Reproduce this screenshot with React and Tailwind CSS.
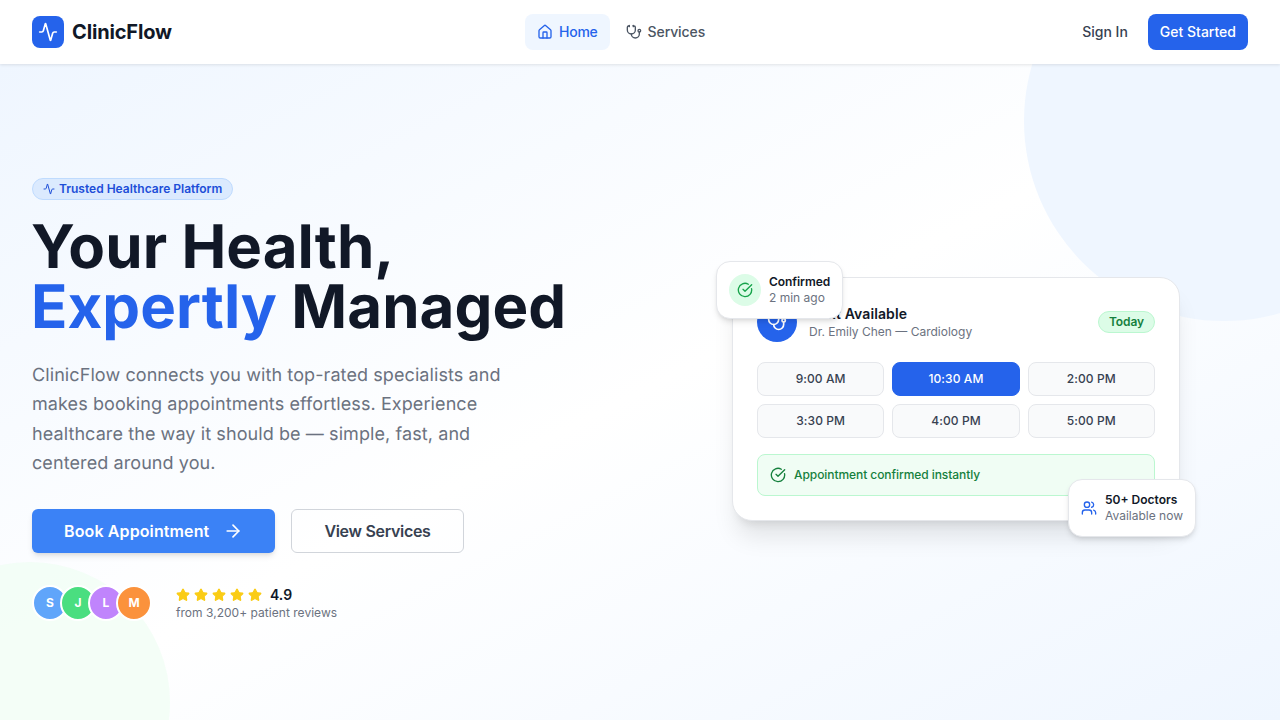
import React from "react";
import { Activity, House, Stethoscope, CircleCheckBig, Users, ArrowRight, Star } from "lucide-react";

const slots = ["9:00 AM", "10:30 AM", "2:00 PM", "3:30 PM", "4:00 PM", "5:00 PM"];
const avatars = [
  ["S", "bg-[#60a5fa]"],
  ["J", "bg-[#4ade80]"],
  ["L", "bg-[#c084fc]"],
  ["M", "bg-[#fb923c]"],
];

export default function App() {
  return (
    <div className="h-[720px] overflow-hidden bg-white font-['Inter',sans-serif] text-[#111827] antialiased">
      <nav className="relative z-20 flex h-16 items-center justify-between bg-white px-8 shadow-[0_1px_3px_rgba(0,0,0,0.1)]">
        <div className="flex items-center gap-2">
          <div className="flex h-8 w-8 items-center justify-center rounded-lg bg-[#2563eb]">
            <Activity className="h-5 w-5 text-white" strokeWidth={2} />
          </div>
          <span className="text-xl font-bold tracking-[-0.15px] text-[#111827]">ClinicFlow</span>
        </div>
        <div className="flex items-center gap-1">
          <a className="flex h-9 items-center gap-1.5 rounded-lg bg-[#eff6ff] px-3 text-sm font-medium tracking-[-0.25px] text-[#2563eb]">
            <House className="h-4 w-4" />
            Home
          </a>
          <a className="flex h-9 items-center gap-1.5 rounded-lg px-3 text-sm font-medium tracking-[-0.1px] text-[#4b5563]">
            <Stethoscope className="h-4 w-4" />
            Services
          </a>
        </div>
        <div className="flex items-center gap-2">
          <a className="flex h-9 items-center px-3 text-sm font-medium text-[#374151]">Sign In</a>
          <a className="flex h-9 items-center rounded-lg bg-[#2563eb] px-3 text-sm font-medium text-white">Get Started</a>
        </div>
      </nav>

      <main className="relative h-[656px] overflow-hidden bg-gradient-to-br from-[#eff6ff] via-white to-[#eff6ff] px-8 pt-[14px]">
        <div className="absolute left-[1024px] top-[-143px] h-[400px] w-[400px] rounded-full bg-[#eff6ff]" />
        <div className="absolute left-[-110px] top-[498px] h-[280px] w-[280px] rounded-full bg-[#f0fdf4]/70" />

        <div className="relative grid h-full grid-cols-2 items-center gap-12">
          <div>
            <div className="inline-flex h-[22px] items-center gap-1 rounded-full border border-[#bfdbfe] bg-[#dbeafe] px-2.5 text-xs font-semibold text-[#1d4ed8]">
              <Activity className="h-3 w-3" />
              Trusted Healthcare Platform
            </div>
            <h1 className="mt-4 -ml-px text-6xl leading-[60px] font-bold tracking-[0.06px] text-[#111827] [text-rendering:geometricPrecision]">
              Your Health,
              <br />
              <span className="text-[#2563eb]">Expertly</span> Managed
            </h1>
            <p className="mt-6 max-w-[512px] text-lg leading-[29.4px] tracking-[0.09px] text-[#6b7280] [text-rendering:geometricPrecision]">
              ClinicFlow connects you with top-rated specialists and makes booking appointments effortless. Experience healthcare the way it should be — simple, fast, and centered around you.
            </p>
            <div className="mt-[30.4px] flex items-center gap-4">
              <a className="flex h-11 items-center gap-3.5 rounded-md bg-[#3b82f6] px-8 font-semibold tracking-[0.12px] text-white shadow-md">
                Book Appointment
                <ArrowRight className="h-5 w-5" />
              </a>
              <a className="flex h-11 items-center rounded-md border border-[#d1d5db] px-8 font-semibold tracking-[-0.3px] text-[#374151]">View Services</a>
            </div>
            <div className="mt-8 flex items-center gap-6">
              <div className="flex -space-x-2">
                {avatars.map(([l, c]) => (
                  <div key={l} className={`flex h-9 w-9 items-center justify-center rounded-full border-2 border-white text-xs font-bold text-white ${c}`}>
                    {l}
                  </div>
                ))}
              </div>
              <div>
                <div className="flex items-center gap-2">
                  <div className="flex gap-1">
                    {[0, 1, 2, 3, 4].map((i) => (
                      <Star key={i} className="h-3.5 w-3.5 fill-[#facc15] text-[#facc15]" />
                    ))}
                  </div>
                  <span className="text-sm font-semibold text-[#111827]">4.9</span>
                </div>
                <div className="text-xs tracking-[0.03px] text-[#6b7280]">from 3,200+ patient reviews</div>
              </div>
            </div>
          </div>

          <div className="relative mx-auto w-[448px]">
            <div className="rounded-[20px] border border-[#e5e7eb] bg-white p-6 shadow-xl">
              <div className="flex items-center justify-between">
                <div className="flex items-center gap-3">
                  <div className="flex h-10 w-10 items-center justify-center rounded-full bg-[#2563eb]">
                    <Stethoscope className="h-5 w-5 text-white" />
                  </div>
                  <div>
                    <div className="text-sm font-semibold tracking-[0.1px] text-[#111827]">Next Available</div>
                    <div className="text-xs text-[#6b7280]">Dr. Emily Chen — Cardiology</div>
                  </div>
                </div>
                <span className="rounded-full border border-[#bbf7d0] bg-[#dcfce7] px-2.5 py-0.5 text-xs font-semibold tracking-[-0.1px] text-[#15803d]">Today</span>
              </div>
              <div className="mt-5 grid grid-cols-3 gap-2">
                {slots.map((s) => (
                  <div
                    key={s}
                    className={
                      s === "10:30 AM"
                        ? "flex h-[34px] items-center justify-center rounded-lg border border-[#2563eb] bg-[#2563eb] text-xs font-medium tracking-[0.1px] text-white"
                        : "flex h-[34px] items-center justify-center rounded-lg border border-[#e5e7eb] bg-[#f9fafb] text-xs font-medium tracking-[0.1px] text-[#374151]"
                    }
                  >
                    {s}
                  </div>
                ))}
              </div>
              <div className="mt-4 flex h-[42px] items-center gap-2 rounded-lg border border-[#bbf7d0] bg-[#f0fdf4] px-3 text-xs font-medium tracking-[-0.07px] text-[#15803d]">
                <CircleCheckBig className="h-4 w-4" />
                Appointment confirmed instantly
              </div>
            </div>

            <div className="absolute -left-4 -top-4 flex items-center gap-2 rounded-[14px] border border-[#e5e7eb] bg-white p-3 shadow-md">
              <div className="flex h-8 w-8 items-center justify-center rounded-full bg-[#dcfce7]">
                <CircleCheckBig className="h-4 w-4 text-[#16a34a]" />
              </div>
              <div>
                <div className="text-xs font-semibold tracking-[-0.06px] text-[#111827]">Confirmed</div>
                <div className="text-xs text-[#6b7280]">2 min ago</div>
              </div>
            </div>

            <div className="absolute -bottom-4 -right-4 flex items-center gap-2 rounded-[14px] border border-[#e5e7eb] bg-white p-3 shadow-md">
              <Users className="h-4 w-4 text-[#2563eb]" />
              <div>
                <div className="text-xs font-semibold text-[#111827]">50+ Doctors</div>
                <div className="text-xs text-[#6b7280]">Available now</div>
              </div>
            </div>
          </div>
        </div>
      </main>
    </div>
  );
}
